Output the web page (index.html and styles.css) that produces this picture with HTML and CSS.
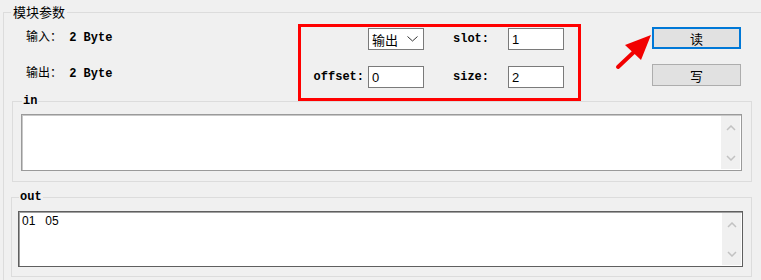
FILE: index.html
```html
<!DOCTYPE html>
<html lang="zh-CN">
<head>
  <meta charset="UTF-8">
  <title>模块参数</title>
  <link rel="stylesheet" href="styles.css">
</head>
<body>
  <fieldset class="group group-main">
    <legend>模块参数</legend>

    <div class="top">
      <div class="info">
        <p>输入：<span class="val"> 2 Byte</span></p>
        <p>输出：<span class="val"> 2 Byte</span></p>
      </div>

      <div class="params">
        <div class="combo">
          <span>输出</span>
          <svg width="11" height="6" viewBox="0 0 11 6"><polyline points="0.5,0.5 5.5,5 10.5,0.5" fill="none" stroke="#333" stroke-width="1"/></svg>
        </div>
        <label class="col3" for="slot">slot:</label>
        <input type="text" id="slot" value="1">

        <label class="col1" for="offset">offset:</label>
        <input type="text" id="offset" value="0">
        <label class="col3" for="size">size:</label>
        <input type="text" id="size" value="2">
      </div>

      <div class="actions">
        <button class="btn btn-default">读</button>
        <button class="btn">写</button>
        <svg class="arrow" width="44" height="50" viewBox="0 0 44 50">
          <line x1="6" y1="40" x2="23" y2="24" stroke="#f20000" stroke-width="4" stroke-linecap="round"/>
          <polygon points="39,8 13,18 29,33" fill="#f20000"/>
        </svg>
      </div>
    </div>

    <fieldset class="group group-in">
      <legend>in</legend>
      <div class="box">
        <div class="textbox">
          <textarea></textarea>
          <div class="scroll">
            <svg width="10" height="6" viewBox="0 0 10 6"><polyline points="1,5 5,1 9,5" fill="none" stroke="#c2c2c2" stroke-width="1.5"/></svg>
            <svg width="10" height="6" viewBox="0 0 10 6"><polyline points="1,1 5,5 9,1" fill="none" stroke="#c2c2c2" stroke-width="1.5"/></svg>
          </div>
        </div>
      </div>
    </fieldset>

    <fieldset class="group group-out">
      <legend>out</legend>
      <div class="box">
        <div class="textbox textbox-dark">
          <textarea>01   05</textarea>
          <div class="scroll">
            <svg width="10" height="6" viewBox="0 0 10 6"><polyline points="1,5 5,1 9,5" fill="none" stroke="#c2c2c2" stroke-width="1.5"/></svg>
            <svg width="10" height="6" viewBox="0 0 10 6"><polyline points="1,1 5,5 9,1" fill="none" stroke="#c2c2c2" stroke-width="1.5"/></svg>
          </div>
        </div>
      </div>
    </fieldset>
  </fieldset>
</body>
</html>
```

FILE: styles.css
```css
body {
  margin: 0;
  background: #f0f0f0;
  font-family: "Liberation Mono", "Noto Sans CJK SC", monospace;
  font-size: 12px;
  color: #000;
  overflow: hidden;
  height: 280px;
}

.group {
  border: 1px solid #dcdcdc;
  margin: 0;
  padding: 0;
  min-width: 0;
  box-sizing: border-box;
}

.group legend {
  padding: 0 1px;
  line-height: 12px;
  font-family: "Liberation Mono", monospace;
  font-size: 12px;
  font-weight: bold;
}

.group-main {
  margin: 4px 0 0 3px;
  width: 790px;
  padding-bottom: 6px;
}

.group-main > legend {
  font-family: "Noto Sans CJK SC", sans-serif;
  font-weight: normal;
  font-size: 13px;
  line-height: 16px;
  margin-left: 7px;
  padding: 0 2px;
}

.top {
  display: flex;
  align-items: flex-start;
  height: 75px;
}

.info {
  width: 294px;
  padding-left: 22px;
  box-sizing: border-box;
}

.info p {
  margin: 9px 0 0;
  line-height: 18px;
  white-space: pre;
}

.info p + p {
  margin-top: 18px;
}

.info .val {
  font-weight: bold;
}

.params {
  position: relative;
  z-index: 1;
  margin-top: 4px;
  border: 3px solid #ff0000;
  padding: 1px 14px 10px 0;
  display: grid;
  grid-template-columns: 67px 56px 84px 56px;
  grid-auto-rows: 22px;
  row-gap: 16px;
  align-items: center;
}

.params label {
  font-weight: bold;
}

.params .col1 {
  grid-column: 1;
  text-align: right;
  padding-right: 4px;
}

.params .col3 {
  grid-column: 3;
  padding-left: 29px;
}

.combo {
  grid-column: 2;
  height: 22px;
  box-sizing: border-box;
  border: 1px solid #7a7a7a;
  background: #fff;
  display: flex;
  align-items: center;
  justify-content: space-between;
  padding: 0 5px 0 3px;
  font-family: "Noto Sans CJK SC", sans-serif;
  font-size: 13px;
}

.params input {
  width: 56px;
  height: 22px;
  box-sizing: border-box;
  border: 1px solid #7a7a7a;
  background: #fff;
  padding: 0 3px;
  font-family: "Liberation Sans", sans-serif;
  font-size: 13px;
  color: #000;
  outline: none;
}

.actions {
  position: relative;
  margin: 7px 0 0 71px;
  width: 89px;
  display: flex;
  flex-direction: column;
  gap: 15px;
}

.btn {
  height: 22px;
  box-sizing: border-box;
  border: 1px solid #adadad;
  background: #e1e1e1;
  font-family: "Noto Sans CJK SC", sans-serif;
  font-size: 13px;
  color: #000;
  padding: 0;
}

.btn-default {
  border: 2px solid #0078d7;
}

.arrow {
  position: absolute;
  left: -40px;
  top: 0;
}

.group-in {
  margin-left: 8px;
  width: 740px;
}

.group-in > legend {
  margin-left: 9px;
}

.group-in .box {
  padding: 7px 9px 10px 8px;
}

.group-out {
  margin: 9px 0 0 7px;
  width: 741px;
}

.group-out > legend {
  margin-left: 7px;
}

.group-out .box {
  padding: 8px 8px 9px 6px;
}

.textbox {
  display: flex;
  height: 57px;
  box-sizing: border-box;
  border: 1px solid #9a9a9a;
  box-shadow: inset 1px 1px 0 #c8c8c8;
  background: #fff;
}

.group-out .textbox {
  height: 56px;
}

.textbox-dark {
  border-color: #5f5f5f;
  box-shadow: inset 1px 1px 0 #a0a0a0;
}

.textbox textarea {
  flex: 1;
  border: none;
  resize: none;
  outline: none;
  background: transparent;
  margin: 1px 0 0 1px;
  padding: 1px 2px;
  font-family: "Liberation Sans", sans-serif;
  font-size: 12px;
  line-height: 14px;
  color: #000;
  white-space: pre;
  overflow: hidden;
}

.scroll {
  width: 19px;
  margin: 1px 1px 1px 0;
  background: #f0f0f0;
  display: flex;
  flex-direction: column;
  align-items: center;
  justify-content: space-between;
  padding: 9px 0 8px;
}
```
